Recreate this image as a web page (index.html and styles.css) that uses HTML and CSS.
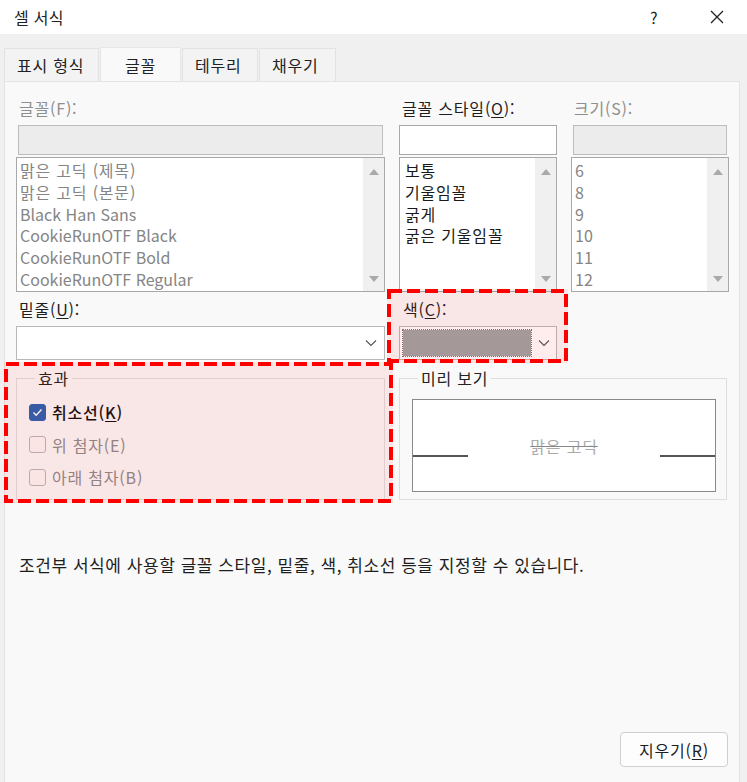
FILE: index.html
```html
<!DOCTYPE html>
<html lang="ko">
<head>
<meta charset="utf-8">
<title>셀 서식</title>
<link rel="stylesheet" href="styles.css">
</head>
<body>
<div class="dialog">
  <header class="titlebar">
    <span class="title">셀 서식</span>
    <span class="help">?</span>
    <span class="close"><svg width="16" height="16" viewBox="0 0 16 16"><path d="M2 2 L14 14 M14 2 L2 14" stroke="#222" stroke-width="1.3" fill="none"/></svg></span>
  </header>
  <nav class="tabs">
    <div class="tab">표시 형식</div>
    <div class="tab active">글꼴</div>
    <div class="tab">테두리</div>
    <div class="tab">채우기</div>
  </nav>
  <main class="panel">
    <div class="grid">
      <div class="label disabled">글꼴(F):</div>
      <div class="label">글꼴 스타일(<u>O</u>):</div>
      <div class="label disabled">크기(S):</div>

      <div class="input disabled-box"></div>
      <div class="input"></div>
      <div class="input disabled-box"></div>

      <div class="list">
        <ul class="items gray">
          <li>맑은 고딕 (제목)</li>
          <li>맑은 고딕 (본문)</li>
          <li class="latin">Black Han Sans</li>
          <li class="latin">CookieRunOTF Black</li>
          <li class="latin">CookieRunOTF Bold</li>
          <li class="latin">CookieRunOTF Regular</li>
        </ul>
        <div class="scroll"><span class="up"></span><span class="down"></span></div>
      </div>
      <div class="list">
        <ul class="items dark">
          <li>보통</li>
          <li>기울임꼴</li>
          <li>굵게</li>
          <li>굵은 기울임꼴</li>
        </ul>
        <div class="scroll"><span class="up"></span><span class="down"></span></div>
      </div>
      <div class="list">
        <ul class="items gray latin">
          <li>6</li>
          <li>8</li>
          <li>9</li>
          <li>10</li>
          <li>11</li>
          <li>12</li>
        </ul>
        <div class="scroll"><span class="up"></span><span class="down"></span></div>
      </div>

      <div class="label row2">밑줄(<u>U</u>):</div>
      <div class="label row2 color-label">색(<u>C</u>):</div>
      <div class="row2"></div>

      <div class="combo">
        <div class="combo-field"></div>
        <svg class="chev" width="12" height="8" viewBox="0 0 12 8"><path d="M1 1.5 L6 6.5 L11 1.5" stroke="#555" stroke-width="1.1" fill="none"/></svg>
      </div>
      <div class="combo color-combo">
        <div class="combo-field"><div class="swatch"></div></div>
        <svg class="chev" width="12" height="8" viewBox="0 0 12 8"><path d="M1 1.5 L6 6.5 L11 1.5" stroke="#555" stroke-width="1.1" fill="none"/></svg>
      </div>
      <div></div>

      <fieldset class="group effects">
        <legend>효과</legend>
        <label class="check on"><span class="box"><svg width="11" height="9" viewBox="0 0 11 9"><path d="M1.5 4.5 L4.2 7.2 L9.5 1.5" stroke="#fff" stroke-width="1.4" fill="none"/></svg></span><span class="ctext">취소선(<u>K</u>)</span></label>
        <label class="check off"><span class="box"></span><span class="ctext">위 첨자(E)</span></label>
        <label class="check off"><span class="box"></span><span class="ctext">아래 첨자(B)</span></label>
      </fieldset>
      <fieldset class="group preview">
        <legend>미리 보기</legend>
        <div class="preview-box">
          <span class="pline"></span>
          <span class="sample">맑은 고딕</span>
          <span class="pline"></span>
        </div>
      </fieldset>
    </div>

    <p class="desc">조건부 서식에 사용할 글꼴 스타일, 밑줄, 색, 취소선 등을 지정할 수 있습니다.</p>

    <div class="footer">
      <button class="btn">지우기(<u>R</u>)</button>
    </div>

    <div class="mark mark-color"><svg width="100%" height="100%"><rect x="2" y="2" width="calc(100% - 4px)" height="calc(100% - 4px)" fill="none" stroke="#f00" stroke-width="4" stroke-dasharray="13 5"/></svg></div>
    <div class="mark mark-effects"><svg width="100%" height="100%"><rect x="2" y="2" width="calc(100% - 4px)" height="calc(100% - 4px)" fill="none" stroke="#f00" stroke-width="4" stroke-dasharray="13 5"/></svg></div>
  </main>
</div>
</body>
</html>
```

FILE: styles.css
```css
* { box-sizing: border-box; }
html, body { margin: 0; padding: 0; }
body {
  width: 747px;
  height: 782px;
  overflow: hidden;
  background: #f0f0f0;
  font-family: "Noto Sans CJK KR", "Noto Sans", sans-serif;
  font-size: 16px;
  letter-spacing: 0.8px;
  color: #1e1e1e;
}
u { text-decoration-thickness: 1px; text-underline-offset: 2px; }
.latin { letter-spacing: 0; }

.dialog { display: flex; flex-direction: column; height: 782px; }

.titlebar {
  height: 34px;
  background: #fff;
  display: flex;
  align-items: center;
  padding-left: 14px;
}
.title { font-size: 16px; color: #222; flex: 1; letter-spacing: 0.3px; }
.help { font-size: 16px; width: 25px; padding-left: 5px; margin-right: 39px; color: #222; }
.close { width: 16px; height: 16px; margin-right: 22px; display: flex; }

.tabs {
  display: flex;
  align-items: flex-end;
  padding-left: 4px;
  height: 47px;
}
.tab {
  height: 33px;
  padding: 0 12px;
  display: flex;
  align-items: center;
  background: #f3f3f3;
  border: 1px solid #e2e2e2;
  border-bottom: none;
  margin-right: 1px;
  color: #222;
}
.tab:first-child { width: 95px; }
.tab.active {
  height: 35px;
  width: 81px;
  justify-content: center;
  background: #f9f9f9;
  border-color: #e6e6e6;
  position: relative;
  top: 1px;
}
.tab:nth-child(3) { width: 76px; }
.tab:nth-child(4) { width: 77px; }

.panel {
  position: relative;
  flex: 1;
  width: 736px;
  margin-left: 4px;
  background: #f9f9f9;
  border: 1px solid #e4e4e4;
  border-bottom: none;
  padding: 16px 0 0 11px;
  display: flex;
  flex-direction: column;
}

.grid {
  display: grid;
  grid-template-columns: 369px 158px 158px;
  column-gap: 14px;
}
.label { height: 20px; line-height: 20px; margin-bottom: 7px; padding-left: 3px; }
.label.disabled { color: #8f8f8f; }
.row2 { margin-top: 7px; }
.color-label { padding-left: 4px; }

.input {
  height: 30px;
  border: 1px solid #a8a8a8;
  background: #fff;
  margin-bottom: 2px;
}
.input.disabled-box { background: #ececec; border-color: #bdbdbd; margin-left: 2px; margin-right: 2px; }

.list {
  height: 135px;
  border: 1px solid #a8a8a8;
  background: #fff;
  display: flex;
}
.items {
  list-style: none;
  margin: 0;
  padding: 2px 0 0 3px;
  flex: 1;
  font-size: 16px;
  line-height: 21.8px;
}
.items.gray { color: #858585; }
.items.dark { color: #1a1a1a; padding-left: 5px; }
.scroll {
  width: 21px;
  background: #f0f0f0;
  display: flex;
  flex-direction: column;
  justify-content: space-between;
  align-items: center;
  padding: 11px 0 9px;
}
.scroll span { width: 0; height: 0; border-left: 5px solid transparent; border-right: 5px solid transparent; }
.scroll .up { border-bottom: 6px solid #a9a9a9; }
.scroll .down { border-top: 6px solid #a9a9a9; }

.combo {
  height: 34px;
  border: 1px solid #b8b8b8;
  background: #fff;
  display: flex;
  align-items: center;
}
.combo-field { flex: 1; min-width: 0; height: 100%; padding: 3px; }
.swatch {
  height: 100%;
  background: #9fa4a4;
  outline: 1px dotted #777;
  outline-offset: 0;
}
.chev { flex-shrink: 0; margin: 0 7px 0 8px; }
.color-combo .chev { margin: 0 6px 0 4px; }

.group {
  margin: 9px 0 0;
  border: 1px solid #dedede;
  padding: 0;
  min-width: 0;
  height: 131px;
}
.group legend { padding: 0 3px; margin-left: 6px; line-height: 18px; color: #222; }
.effects { padding: 16px 0 0 12px; display: flex; flex-direction: column; gap: 14.5px; }
.check { display: flex; align-items: center; height: 18px; gap: 6px; }
.check .box {
  width: 17px;
  height: 17px;
  border-radius: 3px;
  border: 1px solid #b7b7b7;
  background: #faf6f6;
  display: flex;
  align-items: center;
  justify-content: center;
}
.check.on .box { background: #2b62b3; border-color: #2b62b3; }
.check.on .ctext { color: #111; font-weight: 500; }
.check.off .ctext { color: #8c8c8c; }

.preview { grid-column: 2 / span 2; margin-right: 2px; padding: 12px 10px 0 12px; }
.preview-box {
  height: 93px;
  border: 1px solid #8a8a8a;
  background: #fff;
  display: flex;
  align-items: center;
  justify-content: space-between;
  padding-top: 17px;
}
.pline { width: 55px; height: 2px; background: #555; margin-top: 3px; }
.sample {
  color: #aaaaaa;
  text-decoration: line-through;
  text-decoration-color: #888;
  text-decoration-thickness: 1px;
  margin-bottom: 16px;
}

.desc { margin: 55px 0 0 3px; line-height: 20px; font-size: 17px; letter-spacing: 0.55px; color: #1e1e1e; }

.footer { margin-top: auto; display: flex; justify-content: flex-end; padding: 0 11px 15px 0; }
.btn {
  width: 108px;
  height: 35px;
  font: inherit;
  letter-spacing: 0.8px;
  color: #1e1e1e;
  background: #fdfdfd;
  border: 1px solid #d0d0d0;
  border-radius: 4px;
}

.mark {
  position: absolute;
  background: rgba(255, 0, 0, 0.07);
  pointer-events: none;
}
.mark svg { display: block; }
.mark-color { left: 382px; top: 207px; width: 181px; height: 74px; }
.mark-effects { left: -1px; top: 280px; width: 389px; height: 141px; }
```
